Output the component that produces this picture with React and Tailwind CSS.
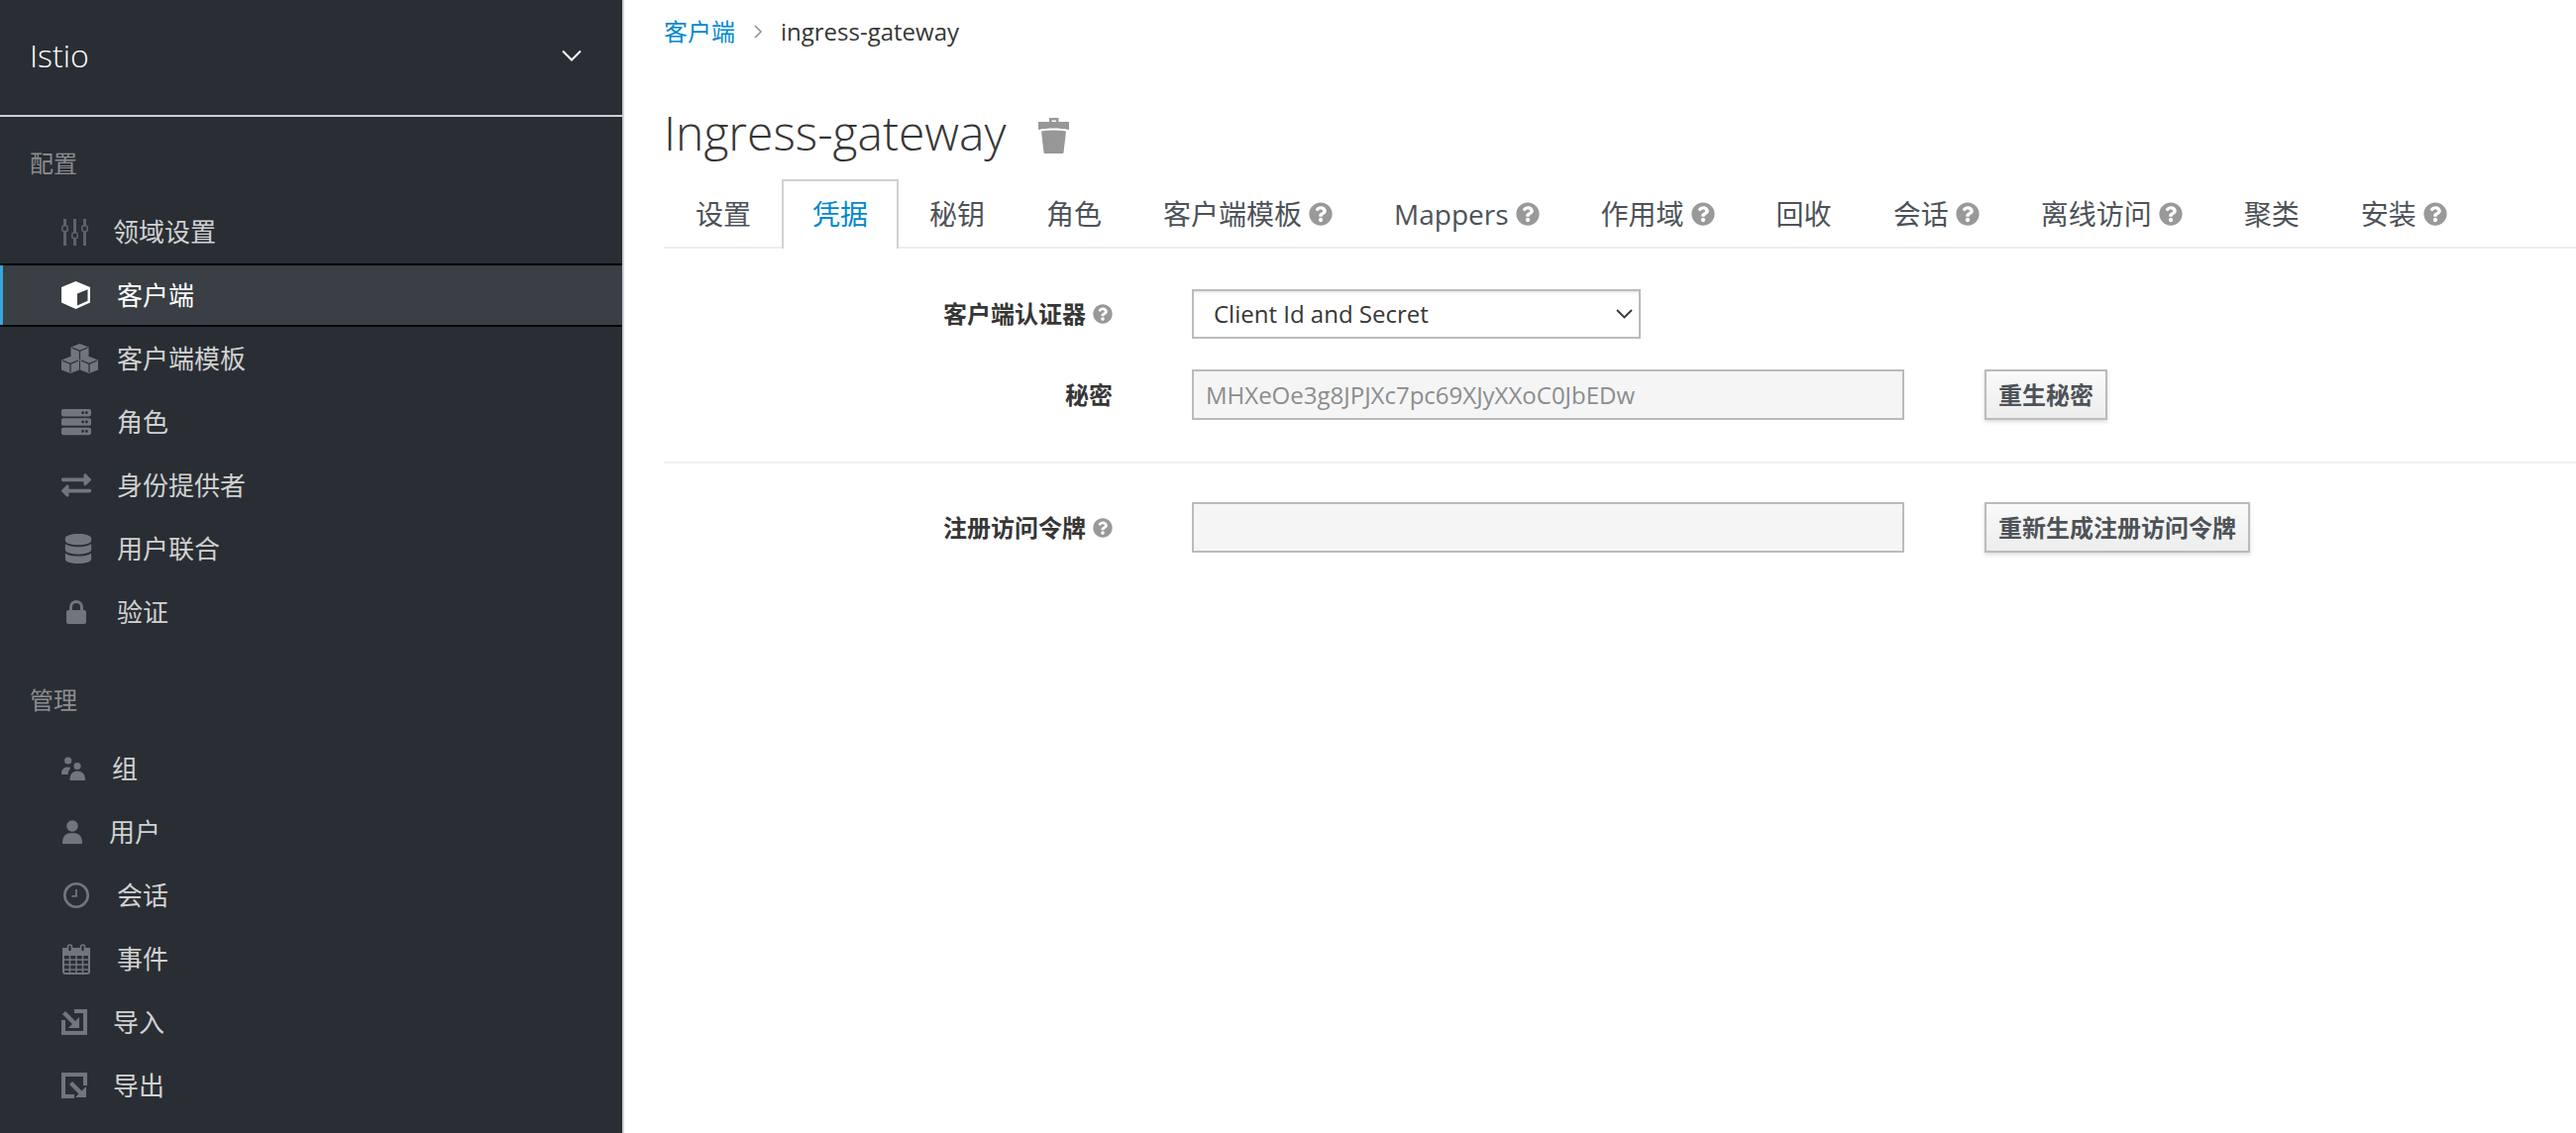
import React from 'react'
import { FaQuestionCircle, FaServer, FaExchangeAlt, FaDatabase } from 'react-icons/fa'

const SlidersIcon = () => (
  <svg width="27" height="27" viewBox="0 0 27 27" fill="#5f6368">
    <rect x="2" y="0" width="3" height="7" />
    <rect x="2" y="12" width="3" height="15" />
    <rect x="0.800" y="7" width="5.400" height="5.500" rx="1.500" fill="none" stroke="#5f6368" strokeWidth="1.600" />
    <rect x="12" y="0" width="3" height="14" />
    <rect x="12" y="19" width="3" height="8" />
    <rect x="10.800" y="14" width="5.400" height="5.500" rx="1.500" fill="none" stroke="#5f6368" strokeWidth="1.600" />
    <rect x="22" y="0" width="3" height="7" />
    <rect x="22" y="12" width="3" height="15" />
    <rect x="20.800" y="7" width="5.400" height="5.500" rx="1.500" fill="none" stroke="#5f6368" strokeWidth="1.600" />
  </svg>
)

const CubeIcon = () => (
  <svg width="29" height="28" viewBox="0 0 29 28" fill="white">
    <path
      fillRule="evenodd"
      d="M14.500 0L29 6v15.500L14.500 28 0 21.500V6zM16 12.500v12l10.500-4.700V8.200z"
    />
  </svg>
)

// one small cube of the template icon, drawn as a filled hexagon with dark edges
const SmallCube = ({ x, y }) => (
  <g transform={`translate(${x} ${y})`}>
    <path d="M9 0l9 3.600v9.800L9 17 0 13.400V3.600z" fill="#72767b" />
    <path d="M1 4l8 3.400L17 4M9 7.400V16" fill="none" stroke="#292e34" strokeWidth="1.200" />
  </g>
)

const CubesIcon = () => (
  <svg width="37" height="30" viewBox="0 0 37 30">
    <SmallCube x={9.500} y={0} />
    <SmallCube x={0} y={13} />
    <SmallCube x={19} y={13} />
  </svg>
)

const LockIcon = () => (
  <svg width="20" height="24" viewBox="0 0 20 24" fill="#72767b">
    <path d="M3 10V7a7 7 0 0 1 14 0v3h-3V7a4 4 0 0 0-8 0v3z" />
    <rect x="0" y="10" width="20" height="14" rx="2" />
  </svg>
)

const UsersIcon = () => (
  <svg width="24" height="24" viewBox="0 0 24 24" fill="#72767b">
    <circle cx="6.700" cy="4" r="3.600" />
    <circle cx="16" cy="9.500" r="3.600" />
    <path d="M0 18c0-5 2-7.500 6.500-7.500 1 0 2 .2 2.800.6C8 13 7 15 6.500 18z" />
    <path d="M8.500 24c0-6 2.500-9.500 7.700-9.500S24 18 24 24z" />
  </svg>
)

const UserIcon = () => (
  <svg width="20" height="24" viewBox="0 0 20 24" fill="#72767b">
    <circle cx="10" cy="6" r="5.800" />
    <path d="M0 24c0-7 2-11 10-11s10 4 10 11z" />
  </svg>
)

const ClockIcon = () => (
  <svg width="26" height="26" viewBox="0 0 26 26" fill="none" stroke="#72767b">
    <circle cx="13" cy="13" r="11.700" strokeWidth="2.600" />
    <path d="M13 7v6.800H8.500" strokeWidth="1.800" />
  </svg>
)

const CalendarIcon = () => (
  <svg width="28" height="31" viewBox="0 0 28 31" fill="none" stroke="#72767b">
    <path d="M1 5h26v6H1z" fill="#72767b" strokeWidth="2" />
    <rect x="1" y="5" width="26" height="25" rx="2" strokeWidth="2" />
    <path d="M1 16h26M1 21h26M1 26h26M7.500 10v20M14 10v20M20.500 10v20" strokeWidth="1.500" />
    <rect x="5.500" y="1" width="4" height="7" rx="2" fill="#292e34" strokeWidth="1.600" />
    <rect x="18.500" y="1" width="4" height="7" rx="2" fill="#292e34" strokeWidth="1.600" />
  </svg>
)

const ImportIcon = () => (
  <svg width="26" height="26" viewBox="0 0 26 26" fill="#72767b">
    <path d="M13 0H26V26H0V11H4V22H22V4H13z" />
    <path d="M4 2L15 13 12 16 1 5z" />
    <path d="M18 8V19H7z" />
  </svg>
)

const ExportIcon = () => (
  <svg width="26" height="26" viewBox="0 0 26 26" fill="#72767b">
    <path d="M0 0H26V13H22V4H4V22H13V26H0z" />
    <path d="M11 9L22 20 19 23 8 12z" />
    <path d="M25 14V25H14z" />
  </svg>
)

const TrashIcon = () => (
  <svg width="31" height="36" viewBox="0 0 31 36" fill="#979797">
    <path d="M11 0h9.500v5H18V2.500h-4.500V5H11z" />
    <path d="M0 4h31v8C22 10 9 10 0 12z" />
    <path d="M3 13.500c8-1.500 17-1.500 25 0L25.500 35a1.200 1.200 0 0 1-1.200 1H6.700a1.200 1.200 0 0 1-1.200-1z" />
  </svg>
)

const configItems = [
  { label: '领域设置', icon: <SlidersIcon />, box: 'w-[52px]' },
  { label: '客户端', icon: <CubeIcon />, box: 'w-[56px]', active: true },
  { label: '客户端模板', icon: <CubesIcon />, box: 'w-[56px]' },
  { label: '角色', icon: <FaServer size={30} />, box: 'w-[56px]' },
  { label: '身份提供者', icon: <FaExchangeAlt size={30} />, box: 'w-[56px]' },
  { label: '用户联合', icon: <FaDatabase size={30} />, box: 'w-[56px] pl-[2px]' },
  { label: '验证', icon: <LockIcon />, box: 'w-[56px] pl-[5px]' },
]

const manageItems = [
  { label: '组', icon: <UsersIcon />, box: 'w-[51px]' },
  { label: '用户', icon: <UserIcon />, box: 'w-[48px] pl-[1px]' },
  { label: '会话', icon: <ClockIcon />, box: 'w-[56px] pl-[2px]' },
  { label: '事件', icon: <CalendarIcon />, box: 'w-[56px] pl-[1px]' },
  { label: '导入', icon: <ImportIcon />, box: 'w-[52px]' },
  { label: '导出', icon: <ExportIcon />, box: 'w-[52px]' },
]

const tabs = [
  { label: '设置' },
  { label: '凭据', active: true },
  { label: '秘钥' },
  { label: '角色' },
  { label: '客户端模板', help: true },
  { label: 'Mappers', help: true },
  { label: '作用域', help: true },
  { label: '回收' },
  { label: '会话', help: true },
  { label: '离线访问', help: true },
  { label: '聚类' },
  { label: '安装', help: true },
]

const NavItem = ({ item }) => (
  <div
    className={`relative flex h-[64px] items-center pl-[62px] text-[26px] ${
      item.active ? 'border-y-2 border-black bg-[#393f44] text-white' : 'text-[#d1d1d1]'
    }`}
  >
    {item.active && <span className="absolute left-0 top-0 h-full w-[3px] bg-[#39a5dc]" />}
    <span className={`flex shrink-0 items-center text-[#72767b] ${item.box}`}>{item.icon}</span>
    <span className="leading-none">{item.label}</span>
  </div>
)

export default function App() {
  return (
    <div className="flex h-[1144px] w-full overflow-hidden bg-white font-['Open_Sans','Noto_Sans_CJK_SC',sans-serif] text-[#363636]">
      <aside className="w-[630px] shrink-0 border-r-2 border-[#d1d1d1] bg-[#292e34]">
        <div className="flex h-[118px] items-center justify-between border-b-2 border-[#d1d1d1] pb-[4px] pl-[30px] pr-[40px]">
          <span className="text-[32px] font-light text-white">Istio</span>
          <svg width="22" height="12" viewBox="0 0 22 12" fill="none" stroke="white" strokeWidth="2">
            <path d="M2 1.500l9 9 9-9" />
          </svg>
        </div>

        <div className="pb-[22px] pl-[30px] pt-[32px] text-[24px] leading-[30px] text-[#8b8d8f]">配置</div>
        {configItems.map(item => <NavItem key={item.label} item={item} />)}

        <div className="pb-[22px] pl-[30px] pt-[42px] text-[24px] leading-[30px] text-[#8b8d8f]">管理</div>
        {manageItems.map(item => <NavItem key={item.label} item={item} />)}
      </aside>

      <main className="min-w-0 flex-1 pl-[40px]">
        <div className="flex h-[66px] items-center pb-[3px] text-[24px]">
          <span className="text-[#0088ce]">客户端</span>
          <svg className="mx-[18px]" width="10" height="14" viewBox="0 0 10 14" fill="none" stroke="#8b8d8f" strokeWidth="1.500">
            <path d="M2 1l6 6-6 6" />
          </svg>
          <span>ingress-gateway</span>
        </div>

        <div className="flex h-[115px] items-center gap-[32px] pt-[20px]">
          <h1 className="text-[48px] font-light leading-none">Ingress-gateway</h1>
          <span className="mt-[7px]"><TrashIcon /></span>
        </div>

        <div className="flex h-[70px] border-b-2 border-[#ededed] pl-[1px]">
          {tabs.map(tab => (
            <div
              key={tab.label}
              className={`-mb-[2px] flex items-center border-2 border-b-0 px-[29px] pb-[2px] text-[28px] ${
                tab.active ? 'border-[#d1d1d1] bg-white text-[#0088ce]' : 'border-transparent text-[#4d5258]'
              }`}
            >
              <span>{tab.label}</span>
              {tab.help && <FaQuestionCircle size={24} className="ml-[7px] text-[#999999]" />}
            </div>
          ))}
        </div>

        <div className="flex items-center pt-[41px]">
          <label className="flex w-[453px] items-center justify-end gap-[7px] text-[24px] font-bold">
            客户端认证器 <FaQuestionCircle size={20} className="text-[#999999]" />
          </label>
          <div className="relative ml-[80px] w-[453px]">
            <select className="h-[50px] w-full appearance-none border-2 border-[#bbbbbb] bg-white pl-[20px] text-[24px] text-[#363636] shadow-[inset_0_2px_2px_rgba(3,3,3,0.08)] outline-none">
              <option>Client Id and Secret</option>
            </select>
            <svg className="absolute right-[8px] top-[20px]" width="17" height="10" viewBox="0 0 17 10" fill="none" stroke="#363636" strokeWidth="1.800">
              <path d="M1 1l7.500 7.500L16 1" />
            </svg>
          </div>
        </div>

        <div className="flex items-center pt-[31px]">
          <label className="w-[453px] text-right text-[24px] font-bold">秘密</label>
          <input
            readOnly
            value="MHXeOe3g8JPJXc7pc69XJyXXoC0JbEDw"
            className="ml-[80px] h-[51px] w-[719px] border-2 border-[#bbbbbb] bg-[#f5f5f5] px-[12px] text-[24px] text-[#8b8d8f] outline-none"
          />
          <button className="ml-[81px] h-[51px] border-2 border-[#bbbbbb] bg-gradient-to-b from-[#fafafa] to-[#ededed] px-[12px] text-[24px] font-bold text-[#4d5258] shadow-[0_2px_4px_rgba(3,3,3,0.15)]">
            重生秘密
          </button>
        </div>

        <div className="mt-[42px] h-[2px] bg-[#f1f1f1]" />

        <div className="flex items-center pt-[39px]">
          <label className="flex w-[453px] items-center justify-end gap-[7px] text-[24px] font-bold">
            注册访问令牌 <FaQuestionCircle size={20} className="text-[#999999]" />
          </label>
          <input
            readOnly
            value=""
            className="ml-[80px] h-[51px] w-[719px] border-2 border-[#bbbbbb] bg-[#f5f5f5] px-[12px] text-[24px] outline-none"
          />
          <button className="ml-[81px] h-[51px] border-2 border-[#bbbbbb] bg-gradient-to-b from-[#fafafa] to-[#ededed] px-[12px] text-[24px] font-bold text-[#4d5258] shadow-[0_2px_4px_rgba(3,3,3,0.15)]">
            重新生成注册访问令牌
          </button>
        </div>
      </main>
    </div>
  )
}
